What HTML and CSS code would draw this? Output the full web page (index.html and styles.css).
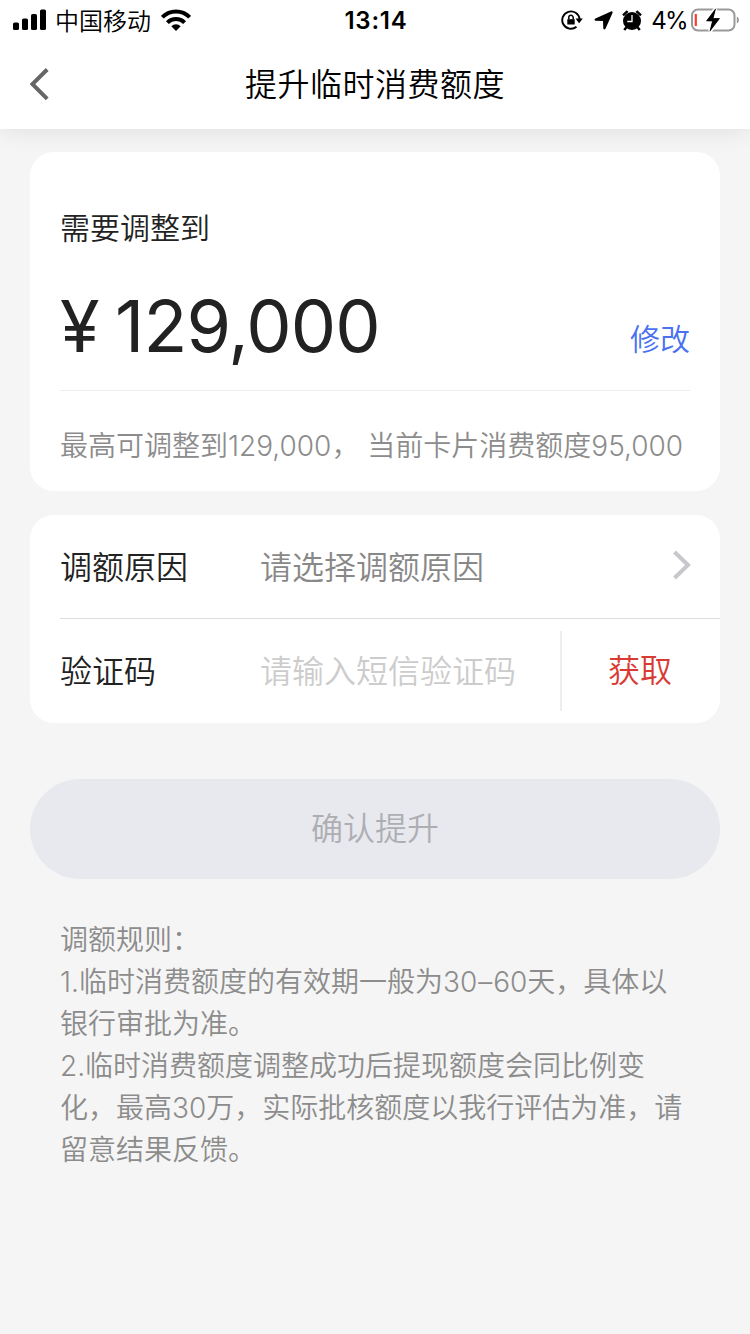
FILE: index.html
```html
<!DOCTYPE html>
<html lang="zh-CN">
<head>
<meta charset="utf-8">
<title>提升临时消费额度</title>
<link rel="stylesheet" href="styles.css">
</head>
<body>
<header class="header">
  <div class="status">
    <div class="status-left">
      <svg class="signal" width="34" height="22" viewBox="0 0 34 22"><rect x="0" y="13.5" width="6" height="7.5" rx="1.6"/><rect x="9" y="9.500" width="6" height="11.500" rx="1.600"/><rect x="18" y="5" width="6" height="16" rx="1.600"/><rect x="27" y="0.500" width="6" height="20.500" rx="1.600"/></svg>
      <span class="carrier">中国移动</span>
      <svg width="30" height="22" viewBox="0 0 30 22"><g fill="none" stroke="#000" stroke-width="4"><path d="M1.300 8.200a19.300 19.300 0 0 1 27.400 0"/><path d="M6.400 13.600a12.200 12.200 0 0 1 17.200 0"/></g><path d="M10.300 17.300a6.700 6.700 0 0 1 9.400 0L15 22z"/></svg>
    </div>
    <div class="clock">13:14</div>
    <div class="status-right">
      <svg width="22" height="20" viewBox="0 0 22 20"><path d="M15.500 16.800A8.700 8.700 0 1 1 18.600 9" fill="none" stroke="#000" stroke-width="1.900"/><path d="M14.500 8.500h7.300l-3.700 4.800z"/><path d="M6.300 9.200h7.400V14.500H6.300z"/><path d="M7.800 9.600V7.500a2.200 2.200 0 0 1 4.400 0v2.100" fill="none" stroke="#000" stroke-width="1.500"/></svg>
      <svg class="location" width="19" height="19" viewBox="0 0 19 19"><path d="M17 .4Q19-.1 18.500 2L11.600 17.600q-1.500 2-2.300-.2l-.3-7.300-7.400-.4q-2.200-.8-.2-2.300z"/></svg>
      <svg class="alarm" width="20" height="21" viewBox="0 0 20 21"><circle cx="10" cy="11" r="9"/><path d="M1 5.400 5.600 1.100M19 5.400l-4.600-4.300M4.700 17l-2.500 3M15.300 17l2.500 3" stroke="#000" stroke-width="2.500"/><path d="M10 5v6.500H5.300" fill="none" stroke="#fff" stroke-width="1.300"/></svg>
      <span class="percent">4%</span>
      <svg class="battery" width="49" height="26" viewBox="0 0 49 26"><rect x="1" y="2.500" width="42.500" height="21" rx="6" fill="#fff" stroke="#999" stroke-width="2"/><path d="M45.800 9.500q2.200.800 2.200 3.500t-2.200 3.500z" fill="#999"/><path d="M4.800 7v12" stroke="#ff3b30" stroke-width="2.200"/><path d="M24.500 2 15.500 14h6l-2.500 10L28.500 11.500h-6.500z" stroke="#fff" stroke-width="4" paint-order="stroke"/><path d="M24.500 2 15.500 14h6l-2.500 10L28.500 11.500h-6.500z" stroke="#000" stroke-width=".6"/></svg>
    </div>
  </div>
  <div class="nav">
    <svg class="back" width="20" height="34" viewBox="0 0 20 34"><path d="M17.200 2.500 2.500 17.100l14.700 14.700" fill="none" stroke="#666" stroke-width="4"/></svg>
    <h1 class="title">提升临时消费额度</h1>
  </div>
</header>
<main class="content">
  <section class="card amount-card">
    <div class="amount-label">需要调整到</div>
    <div class="amount-row">
      <div class="amount"><span class="yen">¥</span><span class="number">129,000</span></div>
      <a class="edit">修改</a>
    </div>
    <p class="limit">最高可调整到129,000， <span class="current">当前卡片消费额度95,000</span></p>
  </section>
  <section class="card form">
    <div class="row reason">
      <span class="label">调额原因</span>
      <span class="value">请选择调额原因</span>
      <svg class="arrow" width="20" height="30" viewBox="0 0 20 30"><path d="M2.500 2 16 15l-13.500 13" fill="none" stroke="#c7c7cc" stroke-width="4"/></svg>
    </div>
    <div class="row code">
      <span class="label">验证码</span>
      <span class="placeholder">请输入短信验证码</span>
      <a class="get">获取</a>
    </div>
  </section>
  <button class="confirm">确认提升</button>
  <section class="rules">
    <p>调额规则：</p>
    <p>1.临时消费额度的有效期一般为30<span class="dash">–</span>60天，具体以<br>银行审批为准。</p>
    <p>2.临时消费额度调整成功后提现额度会同比例变<br>化，最高30万，实际批核额度以我行评估为准，请<br>留意结果反馈。</p>
  </section>
</main>
</body>
</html>
```
FILE: styles.css
```css
* { box-sizing: border-box; }
body {
  margin: 0;
  min-height: 1334px;
  background: #f5f5f5;
  color: #222;
  font-family: Inter, "Noto Sans CJK SC DemiLight", "Noto Sans CJK SC", sans-serif;
  font-weight: 350;
}
p, h1 { margin: 0; }
svg { display: block; flex: none; }
.header {
  position: relative;
  height: 129px;
  background: #fff;
  color: #000;
  box-shadow: 0 0 24px rgba(0, 0, 0, .1);
}
.status {
  display: grid;
  grid-template-columns: 1fr auto 1fr;
  height: 40px;
  align-items: center;
  padding: 0 11px 0 13px;
  line-height: 40px;
}
.status-left, .status-right { display: flex; align-items: center; }
.status-right { justify-content: flex-end; margin-right: -1px; }
.carrier { margin: 0 10px 0 8px; padding-top: 3px; font-size: 24px; line-height: 37px; }
.clock { padding-top: 2px; font-size: 24px; line-height: 38px; font-weight: 600; letter-spacing: .8px; }
.location { margin-left: 11px; }
.alarm { margin-left: 9px; }
.percent { margin-left: 9px; padding-top: 2px; font-size: 24px; line-height: 38px; font-weight: 400; letter-spacing: -1.6px; }
.battery { margin-left: 4px; }
.nav {
  display: grid;
  grid-template-columns: 30px 1fr 30px;
  height: 87px;
  align-items: center;
}
.back { margin-left: 30px; }
.title {
  padding-bottom: 4px;
  text-align: center;
  font-size: 32px;
  font-weight: 350;
  letter-spacing: .5px;
}
.content { padding: 23px 30px 0; }
.card { background: #fff; border-radius: 24px; }
.amount-card { height: 339px; padding: 54px 30px 0; }
.amount-label { font-size: 30px; line-height: 44px; }
.amount-row {
  display: flex;
  justify-content: space-between;
  height: 141px;
  border-bottom: 1px solid #ededed;
}
.amount { display: flex; padding-top: 32px; line-height: 90px; font-weight: 400; }
.yen { width: 55px; font-size: 72px; line-height: 88px; }
.number { font-size: 72px; line-height: 88px; letter-spacing: -.9px; }
.edit { padding-top: 67px; font-size: 30px; line-height: 44px; color: #4a72f0; }
.limit {
  padding-top: 34px;
  font-size: 28px;
  line-height: 42px;
  color: #8c8c8c;
  white-space: nowrap;
}
.form { height: 208px; margin-top: 24px; padding-left: 30px; font-size: 32px; }
.row { display: flex; height: 104px; align-items: center; padding-bottom: 3px; }
.reason { border-bottom: 1px solid #dedede; }
.label { width: 200px; }
.value { flex: 1; color: #888; }
.arrow { margin-right: 28px; }
.placeholder { flex: 1; color: #ccc; }
.code { padding-bottom: 4px; }
.get {
  width: 160px;
  height: 80px;
  margin-top: 4px;
  border-left: 2px solid #eee;
  padding-right: 2px;
  line-height: 80px;
  text-align: center;
  color: #d83a34;
}
.confirm {
  display: block;
  width: 690px;
  height: 100px;
  margin-top: 56px;
  padding: 0 0 6px;
  border: 0;
  border-radius: 50px;
  background: #e8e9ee;
  color: #aeaeb2;
  font: inherit;
  font-size: 32px;
}
.rules {
  padding: 40px 30px 0;
  font-size: 28px;
  line-height: 42px;
  color: #8c8c8c;
  white-space: nowrap;
}
.dash { margin: 0 1px; }
```
